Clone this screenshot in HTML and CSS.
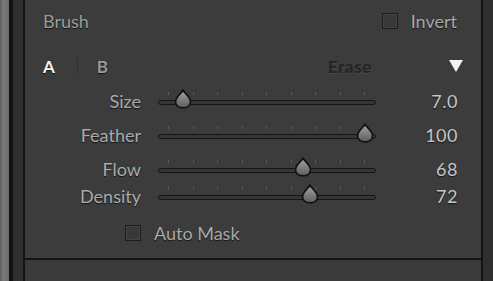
FILE: index.html
```html
<!DOCTYPE html>
<html lang="en">
<head>
    <meta charset="UTF-8">
    <title>Brush</title>
    <link rel="stylesheet" href="styles.css">
</head>
<body>
    <div class="frame">
        <div class="edge-light"></div>
        <div class="edge-black"></div>
        <div class="edge-dark"></div>
        <div class="edge-black thin"></div>

        <div class="panel">
            <div class="head">
                <span class="title">Brush</span>
                <label class="check">
                    <span class="box"></span>
                    <span>Invert</span>
                </label>
            </div>

            <div class="tabs">
                <span class="tab active">A</span>
                <span class="sep"></span>
                <span class="tab">B</span>
                <span class="erase">Erase</span>
                <svg class="menu" width="14" height="14" viewBox="0 0 14 14">
                    <polygon points="0,1 14,1 7,13" fill="#f2f2f2"/>
                </svg>
            </div>

            <div class="row">
                <span class="label">Size</span>
                <div class="track">
                    <div class="ticks"><i></i><i></i><i></i><i></i><i></i><i></i><i></i><i></i><i></i></div>
                    <svg class="thumb" style="left: 11%" width="20" height="20" viewBox="0 0 19 19"><use href="#drop"/></svg>
                </div>
                <span class="value">7.0</span>
            </div>
            <div class="row">
                <span class="label">Feather</span>
                <div class="track">
                    <div class="ticks"><i></i><i></i><i></i><i></i><i></i><i></i><i></i><i></i><i></i></div>
                    <svg class="thumb" style="left: 95.5%" width="20" height="20" viewBox="0 0 19 19"><use href="#drop"/></svg>
                </div>
                <span class="value">100</span>
            </div>
            <div class="row">
                <span class="label">Flow</span>
                <div class="track">
                    <div class="ticks"><i></i><i></i><i></i><i></i><i></i><i></i><i></i><i></i><i></i></div>
                    <svg class="thumb" style="left: 66.5%" width="20" height="20" viewBox="0 0 19 19"><use href="#drop"/></svg>
                </div>
                <span class="value">68</span>
            </div>
            <div class="row close">
                <span class="label">Density</span>
                <div class="track">
                    <div class="ticks"><i></i><i></i><i></i><i></i><i></i><i></i><i></i><i></i><i></i></div>
                    <svg class="thumb" style="left: 70%" width="20" height="20" viewBox="0 0 19 19"><use href="#drop"/></svg>
                </div>
                <span class="value">72</span>
            </div>

            <div class="mask">
                <label class="check">
                    <span class="box"></span>
                    <span>Auto Mask</span>
                </label>
            </div>

            <div class="foot"></div>
        </div>

        <div class="edge-black thin"></div>
        <div class="edge-dark"></div>
    </div>

    <svg width="0" height="0" class="defs">
        <defs>
            <linearGradient id="dropFill" x1="0" y1="0" x2="0" y2="1">
                <stop offset="0" stop-color="#a4a4a4"/>
                <stop offset="1" stop-color="#5c5c5c"/>
            </linearGradient>
            <path id="drop" d="M9.5 1.2 C11.2 4.2 16.6 7.6 16.6 12.2 C16.6 15.9 13.4 18 9.5 18 C5.6 18 2.4 15.9 2.4 12.2 C2.4 7.6 7.8 4.2 9.5 1.2 Z" fill="url(#dropFill)" stroke="#121212" stroke-width="1.6"/>
        </defs>
    </svg>
</body>
</html>
```

FILE: styles.css
```css
body {
    margin: 0;
    background-color: #333;
    font-family: Lato, "Open Sans", sans-serif;
}
.frame {
    display: flex;
    height: 281px;
    overflow: hidden;
}
.edge-light {
    width: 9px;
    background: linear-gradient(to right, #5f5f5f, #7a7a7a 40%, #6a6a6a);
}
.edge-black {
    width: 4px;
    background-color: #121212;
}
.edge-black.thin {
    width: 2px;
}
.edge-dark {
    width: 10px;
    background-color: #2f2f2f;
}
.panel {
    width: 456px;
    background-color: #3c3c3c;
    display: flex;
    flex-direction: column;
    padding-left: 18px;
    padding-right: 24px;
    box-sizing: border-box;
    text-shadow: 0 1px 1px #151515;
}
.head {
    height: 42px;
    display: flex;
    align-items: center;
    justify-content: space-between;
}
.title {
    font-size: 18px;
    color: #9c9c9c;
}
.check {
    display: flex;
    align-items: center;
    gap: 13px;
    font-size: 18px;
    color: #a9a9a9;
}
.box {
    width: 14px;
    height: 14px;
    border: 1px solid #1c1c1c;
    background-color: #383838;
    box-shadow: inset 0 0 0 1px #444;
}
.tabs {
    height: 48px;
    display: flex;
    align-items: center;
}
.tab {
    font-size: 17px;
    font-weight: bold;
    color: #9a9a9a;
}
.tab.active {
    color: #f4f4f4;
}
.sep {
    width: 1px;
    height: 17px;
    background-color: #303030;
    margin: 0 19px 0 22px;
}
.erase {
    margin-left: auto;
    font-size: 17px;
    font-weight: 900;
    color: #242424;
    text-shadow: 0 1px 0 #484848;
    letter-spacing: 0.6px;
}
.menu {
    margin-left: 77px;
    margin-right: -6px;
}
.row {
    height: 22px;
    margin-top: 12px;
    display: flex;
    align-items: center;
}
.tabs + .row {
    margin-top: 0;
}
.row.close {
    margin-top: 5px;
}
.label {
    width: 98px;
    text-align: right;
    font-size: 18px;
    color: #ababab;
}
.track {
    position: relative;
    width: 216px;
    height: 3px;
    margin-left: 17px;
    margin-top: 2px;
    border: 1px solid #151515;
    border-radius: 3px;
    background-color: #353535;
}
.ticks {
    position: absolute;
    left: 9px;
    right: 10px;
    top: -9px;
    display: flex;
    justify-content: space-between;
}
.ticks i {
    width: 1px;
    height: 3px;
    background-color: #5a5a5a;
}
.thumb {
    position: absolute;
    top: -12px;
    margin-left: -10px;
}
.value {
    margin-left: auto;
    margin-right: -1px;
    font-size: 18px;
    letter-spacing: 0.5px;
    color: #c6c6c6;
}
.mask {
    height: 51px;
    display: flex;
    align-items: center;
    padding-left: 82px;
}
.foot {
    flex: 1;
    margin-left: -18px;
    margin-right: -24px;
    border-top: 2px solid #141414;
    background-color: #3a3a3a;
}
.defs {
    position: absolute;
}
```
